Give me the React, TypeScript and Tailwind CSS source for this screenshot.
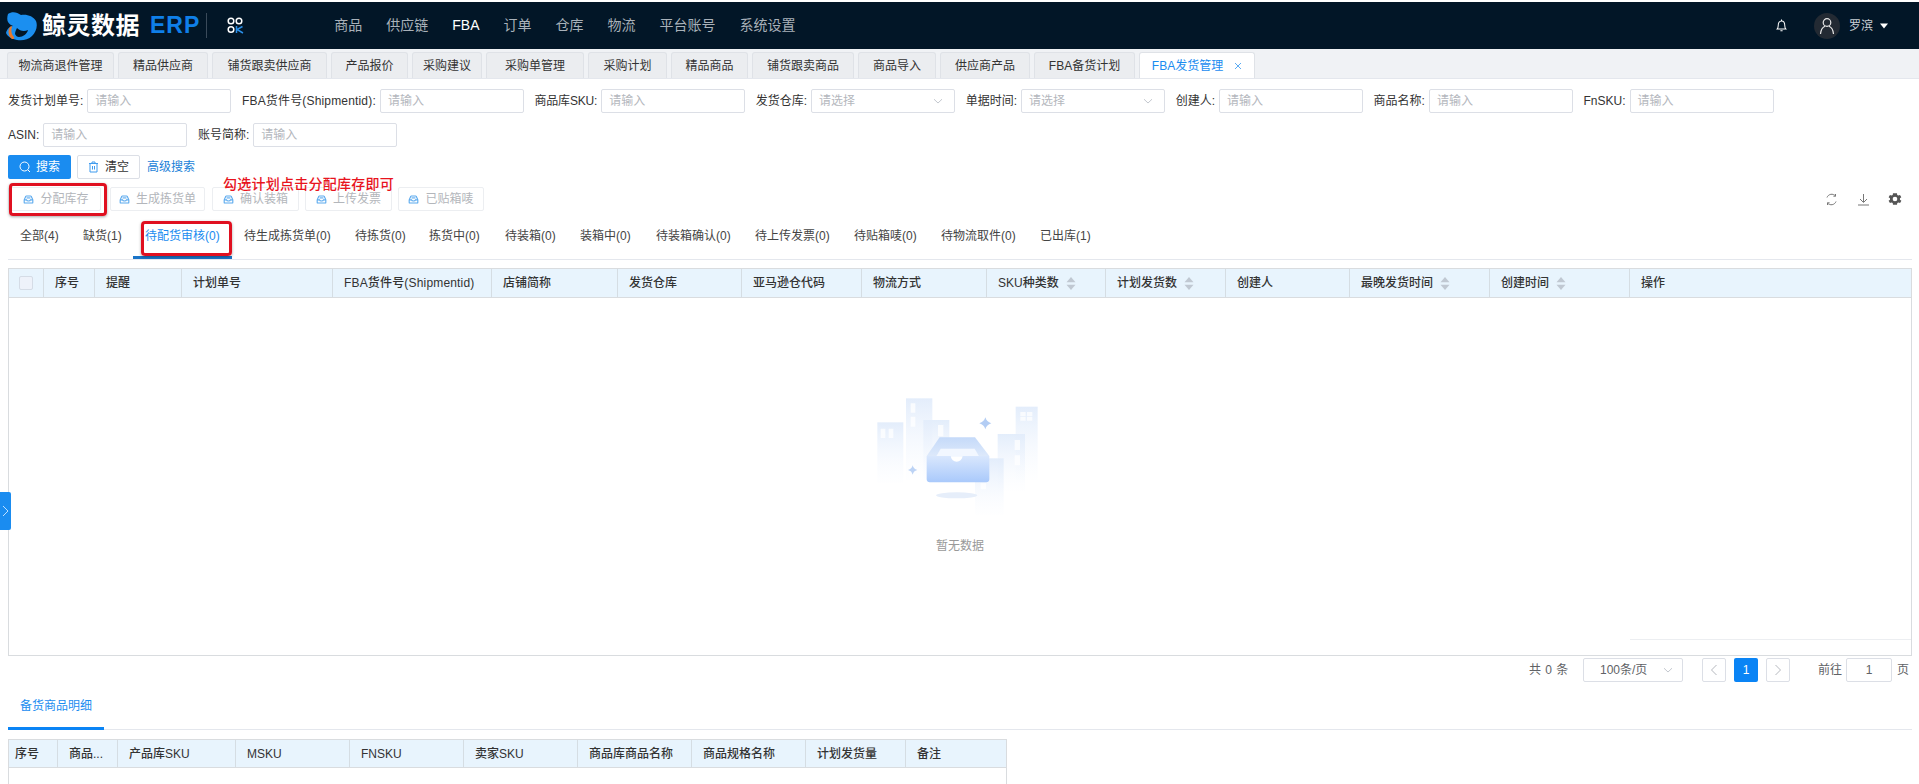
import React from "react";

const navItems = ["商品", "供应链", "FBA", "订单", "仓库", "物流", "平台账号", "系统设置"];
const openTabs: [string, string][] = [
  ["物流商退件管理", "w-[107px]"],
  ["精品供应商", "w-[90px]"],
  ["铺货跟卖供应商", "w-[115px]"],
  ["产品报价", "w-[77px]"],
  ["采购建议", "w-[70px]"],
  ["采购单管理", "w-[98px]"],
  ["采购计划", "w-[79px]"],
  ["精品商品", "w-[77px]"],
  ["铺货跟卖商品", "w-[102px]"],
  ["商品导入", "w-[78px]"],
  ["供应商产品", "w-[90px]"],
  ["FBA备货计划", "w-[101px]"],
];
const statusTabs = ["全部(4)", "缺货(1)", "待配货审核(0)", "待生成拣货单(0)", "待拣货(0)", "拣货中(0)", "待装箱(0)", "装箱中(0)", "待装箱确认(0)", "待上传发票(0)", "待贴箱唛(0)", "待物流取件(0)", "已出库(1)"];
const actions: [string, string][] = [
  ["分配库存", "w-[93px] pl-[3px]"],
  ["生成拣货单", "w-[95px] ml-[9px]"],
  ["确认装箱", "w-[87px] ml-[7px]"],
  ["上传发票", "w-[87px] ml-[6px]"],
  ["已贴箱唛", "w-[86px] ml-[6px]"],
];
const mainCols: [string, boolean][] = [["序号", false], ["提醒", false], ["计划单号", false], ["FBA货件号(Shipmentid)", false], ["店铺简称", false], ["发货仓库", false], ["亚马逊仓代码", false], ["物流方式", false], ["SKU种类数", true], ["计划发货数", true], ["创建人", false], ["最晚发货时间", true], ["创建时间", true], ["操作", false]];
const subCols = ["序号", "商品...", "产品库SKU", "MSKU", "FNSKU", "卖家SKU", "商品库商品名称", "商品规格名称", "计划发货量", "备注"];

function Chevron() {
  return (
    <svg width="12" height="12" viewBox="0 0 12 12" fill="none" stroke="#c4c8cf" strokeWidth="1">
      <path d="M2 4.2 6 8l4-3.8" />
    </svg>
  );
}

function Field({ label, select, tracking = "" }: { label: string; select?: boolean; tracking?: string }) {
  return (
    <div className="flex items-center gap-[4px]">
      <span className={`whitespace-nowrap text-[12px] leading-none text-[#333] ${tracking}`}>{label}:</span>
      <div className="flex h-[24px] w-[144px] items-center justify-between rounded-[2px] border border-[#dcdfe6] pl-[7px] pr-[10px]">
        <span className="text-[12px] text-[#b4b7bd]">{select ? "请选择" : "请输入"}</span>
        {select && <Chevron />}
      </div>
    </div>
  );
}

function Hat() {
  return (
    <svg width="11" height="11" viewBox="0 0 14 14" fill="none" stroke="#5aa9ee" strokeWidth="1.4">
      <path d="M1.5 7.5 3.4 3.2c.2-.4.5-.7 1-.7h5.2c.5 0 .8.3 1 .7l1.9 4.3v3.2c0 .5-.4.8-.8.8H2.3c-.4 0-.8-.3-.8-.8z" />
      <path d="M1.5 7.5h3c.2 1 1.1 1.5 2.5 1.5s2.3-.5 2.5-1.5h3" />
      <path d="M4.5 5h5" />
    </svg>
  );
}

function Sort() {
  return (
    <svg width="10" height="15" viewBox="0 0 10 15" className="ml-[7px] shrink-0">
      <path d="M5 1 9.5 6.2h-9z" fill="#c0c8d2" />
      <path d="M5 14 .5 8.8h9z" fill="#c0c8d2" />
    </svg>
  );
}

function Logo() {
  return (
    <div className="flex items-center">
      <svg width="33" height="29" viewBox="0 0 33 29" className="ml-[5px] mt-[1px]">
        <path d="M3 2C7 -1 12 0 16 3c6-1 12 1 15 6 2 5 0 11-4 15-4 4-10 5-15 4-5-1-9-3-11-7 1-4 4-7 7-7-2-1-4-2-5-4C2 8 2 5 3 2z" fill="#1b8ff0" />
        <path d="M12 16c3 3 7 4 11 2-1 4-5 7-9 7-2 0-3-1-4-3 0-2 1-4 2-6z" fill="#021627" />
        <path d="M6 26c-3-3-3-8-1-11 1-1 2-1 2 0-1 3-1 7 2 10 1 2-2 3-3 1z" fill="#e8782a" />
      </svg>
      <span className="ml-[4px] whitespace-nowrap text-[24px] font-bold leading-none tracking-[0.5px] text-white">鲸灵数据</span>
      <span className="ml-[10px] whitespace-nowrap text-[23px] font-bold leading-none tracking-[1px] text-[#0f7fe8]">ERP</span>
      <span className="ml-[6px] h-[25px] w-px bg-[#3a4a5a]" />
      <svg width="17" height="17" viewBox="0 0 17 17" fill="none" strokeWidth="1.5" className="ml-[20px]">
        <circle cx="4" cy="4" r="2.8" stroke="#fff" />
        <circle cx="12" cy="4" r="2.8" stroke="#fff" />
        <circle cx="4" cy="12.5" r="2.8" stroke="#fff" />
        <path d="M9.5 9v7M15.5 9.5 10 12.5l6 3.5" stroke="#2a8fe8" />
      </svg>
    </div>
  );
}

function EmptyArt() {
  return (
    <svg width="240" height="150" viewBox="0 0 720 450">
      <defs>
        <linearGradient id="bd" x1="0" y1="0" x2="0" y2="1">
          <stop offset="0" stopColor="#e3edfb" />
          <stop offset="1" stopColor="#f7faff" stopOpacity="0.1" />
        </linearGradient>
        <linearGradient id="box" x1="0" y1="0" x2="0" y2="1">
          <stop offset="0" stopColor="#d9e7fd" />
          <stop offset="1" stopColor="#a9c9fb" />
        </linearGradient>
        <linearGradient id="top" x1="0" y1="0" x2="0" y2="1">
          <stop offset="0" stopColor="#c5daf9" />
          <stop offset="1" stopColor="#dde9fb" />
        </linearGradient>
      </defs>
      <rect x="112" y="127" width="78" height="183" fill="url(#bd)" />
      <rect x="198" y="55" width="79" height="245" fill="url(#bd)" />
      <rect x="250" y="120" width="78" height="180" fill="url(#bd)" />
      <rect x="527" y="80" width="66" height="220" fill="url(#bd)" />
      <rect x="473" y="162" width="82" height="170" fill="url(#bd)" />
      <rect x="405" y="235" width="86" height="170" fill="url(#bd)" />
      <path d="M122 146h14v28h-14zM146 146h14v28h-14zM212 70h14v28h-14zM212 110h14v30h-14zM294 135h16v34h-16zM541 96h16v12h-16zM561 96h16v12h-16zM541 110h16v12h-16zM561 110h16v12h-16zM524 180h16v30h-16zM524 226h16v30h-16zM422 310h16v18h-16z" fill="#ffffff" fillOpacity="0.75" />
      <ellipse cx="350" cy="346" rx="62" ry="9" fill="#e6eefa" />
      <path d="M299 172h106l43 56H260z" fill="url(#top)" />
      <path d="M302 206h102l14 24H288z" fill="#f2f7ff" />
      <path d="M260 228h72c2 11 9 17 18 17s16-6 18-17h80v70c0 5-4 9-9 9H269c-5 0-9-4-9-9z" fill="url(#box)" />
      <path d="M436 112c3 10 8 15 18 18-10 3-15 8-18 18-3-10-8-15-18-18 10-3 15-8 18-18z" fill="#b3cdf4" />
      <path d="M218 256c2 8 6 12 14 14-8 2-12 6-14 14-2-8-6-12-14-14 8-2 12-6 14-14z" fill="#bcd3f5" />
    </svg>
  );
}

export default function App() {
  return (
    <div className="relative flex h-[784px] w-full flex-col overflow-hidden bg-white pt-[2px] font-['Liberation_Sans','Noto_Sans_CJK_SC',sans-serif] text-[12px] text-[#333]">
      {/* top bar */}
      <header className="flex h-[47px] shrink-0 items-center bg-[#021627]">
        <Logo />
        <nav className="ml-[90px] flex items-center gap-[24px] text-[14px] text-[#a9b1b9]">
          {navItems.map((n) => (
            <span key={n} className={n === "FBA" ? "font-normal text-white" : ""}>{n}</span>
          ))}
        </nav>
        <div className="ml-auto flex items-center">
          <svg width="11" height="13" viewBox="0 0 12 14" fill="none" stroke="#fff" strokeWidth="1.1">
            <path d="M1.2 10.8c.9-1 1.2-1.7 1.2-3.6C2.4 4.4 3.6 2 6 2s3.6 2.4 3.6 5.2c0 1.9.3 2.6 1.2 3.6z" />
            <path d="M6 .5V2M4.8 12.8h2.4" />
          </svg>
          <span className="ml-[27px] flex h-[26px] w-[26px] items-center justify-center rounded-full bg-[#232a33]">
            <svg width="16" height="18" viewBox="0 0 16 18" fill="none" stroke="#e8e8e8" strokeWidth="1.2">
              <circle cx="8" cy="5.5" r="3.8" />
              <path d="M1.5 17c.3-4 2.6-7 4.5-7.8M14.5 17c-.3-4-2.6-7-4.5-7.8" />
            </svg>
          </span>
          <span className="ml-[9px] text-[12px] text-[#c9ced3]">罗滨</span>
          <svg width="8" height="6" viewBox="0 0 8 6" className="ml-[7px] mr-[31px]"><path d="M0 .5h8L4 5.5z" fill="#fff" /></svg>
        </div>
      </header>

      {/* open page tabs */}
      <div className="flex h-[30px] shrink-0 items-end gap-[4px] border-b border-[#e4e7ed] bg-[#f0f2f5] pl-[7px]">
        {openTabs.map(([t, w]) => (
          <div key={t} className={`flex h-[26px] items-center justify-center whitespace-nowrap rounded-t-[3px] border border-b-0 border-[#dfe2e7] bg-[#ebedf0] text-[12px] text-[#333] ${w}`}>{t}</div>
        ))}
        <div className="flex h-[26px] w-[116px] items-center justify-center whitespace-nowrap rounded-t-[3px] border border-b-0 border-[#dfe2e7] bg-white text-[12px] text-[#1a8cf0]">
          FBA发货管理
          <svg width="8" height="8" viewBox="0 0 8 8" stroke="#4aa3f2" strokeWidth="0.9" className="ml-[11px]"><path d="M1 1l6 6M7 1 1 7" /></svg>
        </div>
      </div>

      {/* filters */}
      <div className="flex shrink-0 gap-[10.6px] pl-[8px] pt-[10px]">
        <Field label="发货计划单号" />
        <Field label="FBA货件号(Shipmentid)" tracking="tracking-[0.17px]" />
        <Field label="商品库SKU" tracking="tracking-[-0.2px]" />
        <Field label="发货仓库" select />
        <Field label="单据时间" select />
        <Field label="创建人" />
        <Field label="商品名称" />
        <Field label="FnSKU" />
      </div>
      <div className="flex shrink-0 gap-[10.6px] pl-[8px] pt-[10px]">
        <Field label="ASIN" />
        <Field label="账号简称" />
      </div>

      {/* search buttons */}
      <div className="flex shrink-0 items-center pl-[8px] pt-[8px]">
        <div className="flex h-[24px] w-[63px] items-center justify-center gap-[5px] rounded-[2px] bg-[#1a8cf0] text-white">
          <svg width="12" height="12" viewBox="0 0 12 12" fill="none" stroke="#fff" strokeWidth="1"><circle cx="5.5" cy="5.5" r="4.5" /><path d="M9 9l2 2" /></svg>
          搜索
        </div>
        <div className="ml-[6px] flex h-[24px] w-[63px] items-center justify-center gap-[6px] rounded-[2px] border border-[#dcdfe6]">
          <svg width="11" height="12" viewBox="0 0 11 12" fill="none" stroke="#3f9bee" strokeWidth="1"><path d="M1 2.5h9M4 2.5V1h3v1.5M2 2.5V11h7V2.5M4.5 5v3.5M6.5 5v3.5" /></svg>
          清空
        </div>
        <span className="ml-[7px] text-[#1a7fd8]">高级搜索</span>
      </div>

      {/* action buttons */}
      <div className="relative mt-[8px] flex h-[24px] shrink-0 items-center pl-[8px]">
        <div className="flex">
          {actions.map(([a, w]) => (
            <div key={a} className={`flex h-[24px] items-center justify-center gap-[6px] rounded-[2px] border border-[#eceef1] text-[#b3b6bb] ${w}`}>
              <Hat />
              {a}
            </div>
          ))}
        </div>
        <span className="absolute left-[223px] top-[-11px] whitespace-nowrap text-[14px] font-medium leading-[16px] tracking-[0.25px] text-[#e8141e]">勾选计划点击分配库存即可</span>
        <span className="absolute left-[9px] top-[-4px] h-[33px] w-[98px] rounded-[4px] border-[3px] border-[#e01020] shadow-[0_1px_3px_rgba(0,0,0,0.35)]" />
        <div className="ml-auto flex items-center gap-[19px] pr-[16px]">
          <svg width="13" height="13" viewBox="0 0 13 13" fill="none" stroke="#777" strokeWidth="1"><path d="M2 4.5A5 5 0 0 1 10.5 3M11 8.5A5 5 0 0 1 2.5 10M10.5 1v2.2H8.4M2.5 12V9.8h2.1" /></svg>
          <svg width="13" height="13" viewBox="0 0 13 13" fill="none" stroke="#777" strokeWidth="1"><path d="M6.5 1v8M3 6l3.5 3.5L10 6M1 12h11" /></svg>
          <svg width="16" height="16" viewBox="0 0 24 24" fill="#555" className="-ml-[2px]"><path fillRule="evenodd" d="M19.4 13a7.5 7.5 0 0 0 0-2l2.1-1.6-2-3.5-2.5 1a7.5 7.5 0 0 0-1.7-1L15 3.3H9l-.4 2.6a7.5 7.5 0 0 0-1.700 1l-2.500-1-2 3.500L4.500 11a7.500 7.500 0 0 0 0 2l-2.100 1.600 2 3.500 2.500-1a7.500 7.500 0 0 0 1.700 1l.4 2.600h6l.4-2.600a7.500 7.500 0 0 0 1.700-1l2.500 1 2-3.500zM12 15.500a3.500 3.500 0 1 1 0-7 3.500 3.500 0 0 1 0 7z" /></svg>
        </div>
      </div>

      {/* status tabs */}
      <div className="relative mx-[8px] mt-[6px] grid h-[43px] w-[1904px] shrink-0 grid-cols-[63px_62px_99px_111px_74px_76px_75px_76px_99px_99px_87px_99px_80px] items-start justify-start border-b border-[#e4e7ed]">
        {statusTabs.map((t) => {
          const active = t === "待配货审核(0)";
          return (
            <span key={t} className={`relative flex h-[37px] items-center whitespace-nowrap pl-[12px] text-[12px] ${active ? "text-[#1a8cf0]" : "text-[#444]"}`}>
              {t}
              {active && <i className="absolute bottom-[-5px] left-0 h-[3px] w-full bg-[#1a74c8]" />}
              {active && <i className="absolute left-[8px] top-[4px] h-[35px] w-[91px] rounded-[4px] border-[3px] border-[#e01020] shadow-[0_1px_3px_rgba(0,0,0,0.35)]" />}
            </span>
          );
        })}
      </div>

      {/* main table */}
      <div className="relative mx-[8px] mt-[8px] flex h-[388px] w-[1904px] shrink-0 flex-col border border-[#d9dcdf]">
        <div className="grid h-[29px] shrink-0 grid-cols-[35px_51px_87px_151px_159px_126px_124px_120px_125px_119px_120px_124px_140px_140px_1fr] border-b border-[#d9dcdf] bg-[#e8f4fd]">
          <div className="flex items-center justify-center border-r border-[#d5dde3]">
            <span className="h-[14px] w-[14px] rounded-[2px] border border-[#d5dce6] bg-[#eef2fa]" />
          </div>
          {mainCols.map(([c, s], i) => (
            <div key={c} className={`flex items-center whitespace-nowrap pl-[11px] font-medium text-[#333] ${c.startsWith("FBA") ? "tracking-[0.17px]" : ""} ${i < mainCols.length - 1 ? "border-r border-[#d5dde3]" : ""}`}>
              {c}
              {s && <Sort />}
            </div>
          ))}
        </div>
        <div className="flex flex-1 flex-col items-center pt-[82px]">
          <EmptyArt />
          <span className="mt-[7px] text-[12px] leading-[18px] text-[#999]">暂无数据</span>
        </div>
        <span className="absolute bottom-[15px] right-0 h-px w-[281px] bg-[#eceef1]" />
      </div>

      {/* pagination */}
      <div className="mt-[2px] flex h-[24px] shrink-0 items-center pl-[1529px] text-[12px] text-[#606266]">
        <span className="w-[54px] whitespace-nowrap tracking-[0.5px]">共 0 条</span>
        <div className="flex h-[24px] w-[100px] items-center justify-between rounded-[2px] border border-[#dcdfe6] pl-[16px] pr-[8px]">
          <span>100条/页</span>
          <Chevron />
        </div>
        <div className="ml-[19px] flex h-[24px] w-[24px] items-center justify-center rounded-[2px] border border-[#dcdfe6]">
          <svg width="8" height="12" viewBox="0 0 8 12" fill="none" stroke="#b5b8be"><path d="M6.5 1 1.5 6l5 5" /></svg>
        </div>
        <div className="ml-[8px] flex h-[24px] w-[24px] items-center justify-center rounded-[2px] bg-[#0a84f5] text-white">1</div>
        <div className="ml-[8px] flex h-[24px] w-[24px] items-center justify-center rounded-[2px] border border-[#dcdfe6]">
          <svg width="8" height="12" viewBox="0 0 8 12" fill="none" stroke="#b5b8be"><path d="M1.5 1l5 5-5 5" /></svg>
        </div>
        <span className="ml-[28px] whitespace-nowrap">前往</span>
        <div className="ml-[4px] flex h-[24px] w-[46px] items-center justify-center rounded-[2px] border border-[#dcdfe6]">1</div>
        <span className="ml-[5px]">页</span>
      </div>

      {/* detail tab */}
      <div className="mx-[8px] mt-[13px] h-[35px] w-[1904px] shrink-0 border-b border-[#e4e7ed]">
        <div className="flex h-[35px] w-[96px] items-center justify-center border-b-[3px] border-[#0a84f5] pb-[10px] text-[12px] text-[#1a8cf0]">备货商品明细</div>
      </div>

      {/* detail table */}
      <div className="ml-[8px] mt-[9px] w-[999px] flex-1 border border-b-0 border-[#d9dcdf]">
        <div className="grid h-[28px] grid-cols-[49px_60px_118px_114px_114px_114px_114px_114px_100px_1fr] border-b border-[#d9dcdf] bg-[#e8f4fd]">
          {subCols.map((c, i) => (
            <div key={c} className={`flex items-center whitespace-nowrap font-medium ${i === 0 ? "pl-[6px]" : "pl-[11px]"} ${i < subCols.length - 1 ? "border-r border-[#d5dde3]" : ""}`}>{c}</div>
          ))}
        </div>
      </div>

      {/* collapsed side handle */}
      <div className="absolute left-0 top-[492px] flex h-[38px] w-[11px] items-center justify-center rounded-r-[2px] bg-[#1a8cf0]">
        <svg width="7" height="12" viewBox="0 0 7 12" fill="none" stroke="#bfe0ff" strokeWidth="1"><path d="M1 1l5 5-5 5" /></svg>
      </div>
    </div>
  );
}
